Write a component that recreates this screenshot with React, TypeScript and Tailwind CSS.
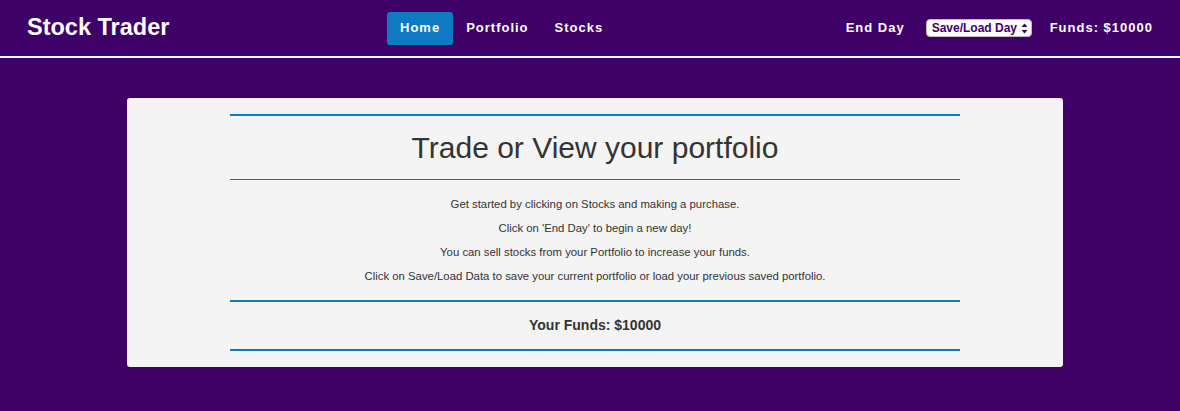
import React from "react";

export default function App() {
  const font = { fontFamily: '"Liberation Sans", Arial, sans-serif' };
  return (
    <div className="min-h-[411px] w-full bg-[#3e0066] text-[#333]" style={font}>
      <header className="flex h-[58px] items-center border-b-2 border-white px-[27px] text-white">
        <div className="w-[141px] whitespace-nowrap text-[23.5px] font-bold leading-none">Stock Trader</div>
        <nav className="ml-[219px] flex items-center text-[13px] font-bold tracking-[1px]">
          <a className="flex h-[33px] items-center rounded-[3px] bg-[#0f7ac2] px-[13px]">Home</a>
          <a className="flex h-[33px] items-center px-[13px]">Portfolio</a>
          <a className="flex h-[33px] items-center px-[13px]">Stocks</a>
        </nav>
        <div className="ml-auto flex items-center text-[13px] font-bold tracking-[1px]">
          <span>End Day</span>
          <div className="ml-[21px] flex h-[18px] w-[106px] items-center justify-between rounded-[4px] border border-[#bbb] bg-white pl-[5px] pr-[3px] text-[12px] font-bold tracking-normal text-[#3e0066]">
            <span>Save/Load Day</span>
            <svg width="7" height="11" viewBox="0 0 7 11" className="fill-[#3e0066]">
              <path d="M3.5 0.5 L6.5 4 L0.5 4 Z" />
              <path d="M3.5 10.5 L6.5 7 L0.5 7 Z" />
            </svg>
          </div>
          <span className="ml-[18px]">Funds: $10000</span>
        </div>
      </header>
      <main className="px-[127px] pt-[40px]">
        <div className="w-[936px] rounded-[3px] bg-[#f4f4f4] pb-[16px] pt-[16px]">
          <div className="mx-auto w-[730px]">
            <div className="border-t-2 border-[#0f7ac2]" />
            <h1 className="flex h-[63px] items-center justify-center text-[30px] font-medium">
              Trade or View your portfolio
            </h1>
            <div className="border-t border-[#1b6fa8]" />
            <div className="py-[12px] text-center text-[11.35px] leading-[24px]">
              <p>Get started by clicking on Stocks and making a purchase.</p>
              <p>Click on 'End Day' to begin a new day!</p>
              <p>You can sell stocks from your Portfolio to increase your funds.</p>
              <p>Click on Save/Load Data to save your current portfolio or load your previous saved portfolio.</p>
            </div>
            <div className="border-t-2 border-[#0f7ac2]" />
            <div className="flex h-[47px] items-center justify-center text-[14px] font-semibold">
              Your Funds: $10000
            </div>
            <div className="border-t-2 border-[#0f7ac2]" />
          </div>
        </div>
      </main>
    </div>
  );
}
